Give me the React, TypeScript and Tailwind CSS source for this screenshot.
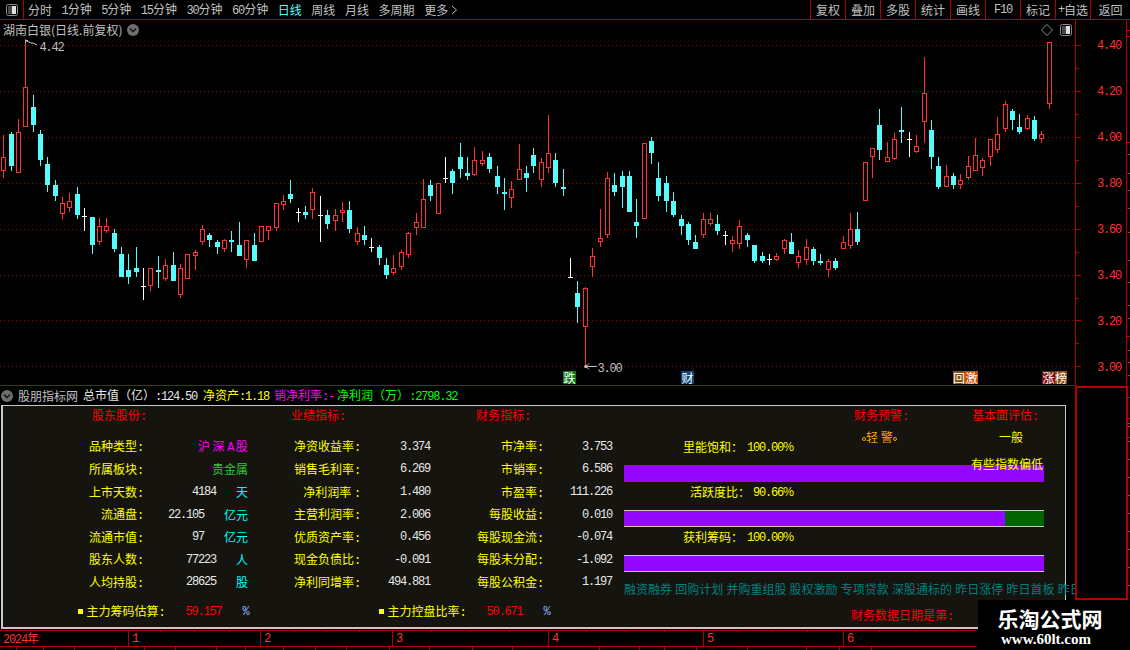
import React from "react";

type Kind = "r" | "c" | "w";
type Row = [number, number, number, number, number, Kind];

// [x, wickTop, wickBottom, bodyTop, bodyBottom, kind] read at 3x, offset by group origin
const groupA: Row[] = [
  [10,45,173,112,149,"r"],[34,37,153,42,137,"c"],[55,-3,155,37,155,"r"],[76,-242,17,-99,17,"r"],[100,-75,35,-39,15,"c"],
  [121,30,137,42,120,"c"],[142,111,216,132,195,"c"],[166,180,243,195,228,"c"],[187,232,297,250,278,"r"],[208,220,276,244,260,"r"],
  [232,202,297,222,285,"c"],[253,265,333,287,287,"w"],[277,292,402,292,375,"c"],[298,294,375,319,362,"r"],[319,294,338,319,329,"r"],
  [343,328,396,340,387,"c"],[364,381,471,402,471,"c"],[385,402,492,450,471,"c"],[409,381,471,444,456,"c"],[430,444,540,499,499,"w"],
  [451,444,513,445,494,"r"],[475,408,504,450,456,"c"],[496,417,483,436,473,"r"],[520,396,483,435,483,"c"],[541,433,534,445,521,"r"],
  [562,402,477,403,473,"r"],[586,390,450,397,404,"r"],[607,316,375,328,362,"r"],[628,339,381,345,360,"c"],[652,360,402,366,381,"c"],
  [673,357,396,361,384,"r"],[694,333,396,360,366,"c"],[718,306,408,375,408,"c"],[739,361,444,361,416,"r"],[763,339,423,375,423,"c"],
  [784,318,363,319,362,"r"],[805,318,360,319,329,"r"],[829,250,333,250,320,"r"],[850,225,270,244,251,"r"],[871,180,249,222,237,"c"],
  [895,265,306,277,277,"w"],[916,258,297,276,285,"c"],[937,204,297,217,266,"r"],[961,228,366,286,286,"w"],[982,270,327,285,312,"c"],
  [1006,267,333,286,300,"r"],[1027,246,306,271,277,"r"],[1048,243,339,270,327,"c"],[1072,321,375,340,362,"r"],[1093,318,375,345,360,"c"],
  [1114,354,396,381,381,"w"],[1138,375,435,381,414,"c"],
];
const groupB: Row[] = [
  [19,444,507,465,495,"c"],[40,435,495,475,487,"r"],[64,420,480,427,467,"r"],[85,366,444,370,433,"r"],[109,309,375,337,350,"r"],
  [130,207,350,268,350,"r"],[151,210,273,225,258,"c"],[175,220,308,220,308,"r"],[196,141,219,205,205,"w"],[217,177,252,183,219,"c"],
  [241,99,204,141,177,"c"],[262,141,210,189,198,"c"],[283,111,198,151,191,"r"],[307,123,168,151,158,"r"],[328,129,189,141,177,"c"],
  [352,168,252,198,231,"c"],[373,205,300,246,252,"c"],[394,213,294,238,260,"r"],[418,102,210,178,206,"r"],[439,168,246,189,204,"c"],
  [460,114,189,135,168,"c"],[484,144,231,157,206,"r"],[505,15,189,130,170,"r"],[526,129,231,150,219,"c"],[550,177,258,231,237,"c"],
  [571,444,504,501,501,"w"],[592,513,639,549,591,"c"],[616,531,769,534,647,"r"],[637,414,501,439,467,"r"],[661,297,411,385,392,"r"],
  [682,186,384,205,371,"r"],[703,189,258,225,246,"c"],[727,183,294,198,231,"c"],[748,183,306,198,306,"c"],[769,267,384,336,348,"c"],
  [793,99,323,99,323,"r"],[814,81,162,93,129,"c"],[835,156,273,204,258,"c"],[859,198,306,219,273,"c"],[880,246,321,273,315,"c"],
  [904,315,375,327,348,"c"],[925,336,405,342,390,"c"],[946,375,417,396,417,"c"],[970,309,384,327,371,"r"],[991,309,348,328,339,"r"],
  [1012,315,375,342,363,"c"],[1036,363,405,376,376,"w"],[1057,378,426,391,399,"r"],[1078,330,417,348,399,"r"],[1102,369,411,375,390,"c"],
];
const groupC: Row[] = [
  [13,405,459,405,453,"c"],[37,426,459,438,453,"c"],[58,432,465,446,446,"w"],[79,429,453,438,446,"r"],[103,387,432,390,414,"r"],
  [124,369,432,396,432,"c"],[145,420,474,438,456,"r"],[169,387,465,411,447,"r"],[190,411,465,417,453,"c"],[211,432,465,453,459,"c"],
  [235,447,501,453,476,"r"],[256,444,480,453,474,"c"],[280,378,417,396,414,"r"],[301,309,417,357,406,"r"],[322,306,405,357,396,"c"],
  [346,156,270,156,270,"r"],[367,114,204,114,137,"r"],[388,-3,150,45,120,"c"],[412,96,156,141,153,"r"],[433,69,150,87,144,"r"],
  [454,-9,99,60,66,"c"],[478,66,141,88,88,"w"],[499,75,129,108,123,"r"],[523,-159,99,-50,32,"r"],[544,30,177,60,141,"c"],
  [565,141,237,168,231,"c"],[589,165,228,198,228,"r"],[610,189,237,198,225,"c"],[631,192,237,210,221,"r"],[655,138,210,168,201,"r"],
  [676,84,183,135,180,"r"],[697,144,198,150,171,"r"],[721,87,168,87,138,"r"],[742,21,129,72,117,"r"],[766,-27,66,-18,53,"r"],
  [787,-3,60,3,30,"c"],[808,12,72,51,66,"c"],[832,15,60,24,54,"r"],[853,18,93,30,87,"c"],[874,63,99,72,84,"r"],[898,-204,-3,-204,-22,"r"],
];

const place = (rows: Row[], ox: number, oy: number): Row[] =>
  rows.map(([x, wt, wb, bt, bb, k]) => [ox + x / 3, oy + wt / 3, oy + wb / 3, oy + bt / 3, oy + bb / 3, k]);

const candles: Row[] = [...place(groupA, 0, 120), ...place(groupB, 380, 110), ...place(groupC, 750, 110)];
const gridY = [45.5, 91.5, 137.5, 183.5, 229.5, 275.5, 320.5, 366.5];

const colour = { r: "#ff3232", c: "#54fcfc", w: "#ffffff" };

function Candle({ d }: { d: Row }) {
  const [x0, wt, wb, bt, bb, k] = d;
  const x = Math.floor(x0) + 0.5;
  const top = Math.round(bt);
  const bot = Math.round(bb);
  const c = colour[k];
  return (
    <g shapeRendering="crispEdges">
      <line x1={x} x2={x} y1={Math.round(wt)} y2={Math.round(wb)} stroke={c} />
      {k === "w" ? (
        <line x1={x - 2.5} x2={x + 2.5} y1={top + 0.5} y2={top + 0.5} stroke={c} />
      ) : k === "r" ? (
        <rect x={x - 2} y={top + 0.5} width={4} height={Math.max(bot - top, 1)} fill="#000" stroke={c} />
      ) : (
        <rect x={x - 2.5} y={top} width={5} height={Math.max(bot - top, 2)} fill={c} />
      )}
    </g>
  );
}

function M({ children, className = "" }: { children: React.ReactNode; className?: string }) {
  return <span className={`font-['Liberation_Mono',monospace] tracking-[-1.2px] ${className}`}>{children}</span>;
}

function CircleChevron({ className = "" }: { className?: string }) {
  return (
    <svg width="12" height="12" viewBox="0 0 12 12" className={className}>
      <circle cx="6" cy="6" r="6" fill="#6e6e6e" />
      <path d="M3 4.5 L6 7.5 L9 4.5" fill="none" stroke="#1a1a1a" strokeWidth="1.6" />
    </svg>
  );
}

function PanelIcon() {
  return (
    <svg width="12" height="12" viewBox="0 0 12 12">
      <rect x="0.5" y="0.5" width="11" height="11" rx="2" fill="#000" stroke="#8c8c8c" />
      <rect x="2" y="2" width="4" height="8" fill="#4a4a4a" />
      <rect x="6" y="2" width="4" height="8" fill="#e0e0e0" />
    </svg>
  );
}

function Ring() {
  return <span className="inline-block w-[4px] h-[4px] rounded-full border border-[#ffa000] align-middle" />;
}

const periods: React.ReactNode[] = [
  "分时",
  <><M>1</M>分钟</>,
  <><M>5</M>分钟</>,
  <><M>15</M>分钟</>,
  <><M>30</M>分钟</>,
  <><M>60</M>分钟</>,
];
const tools: React.ReactNode[] = ["复权", "叠加", "多股", "统计", "画线", <M>F10</M>, "标记", <><M>+</M>自选</>, "返回"];

const Y = "text-[#ffff00]";
const W = "text-[#e8e8e8]";
const C = "text-[#00ffff]";

function Label({ children }: { children: React.ReactNode }) {
  return <div className={`${Y} text-right leading-[22.6px]`}>{children}</div>;
}
function Val({ children, unit }: { children: React.ReactNode; unit?: string }) {
  return (
    <div className={`flex justify-end items-center gap-[20px] leading-[22.6px] pt-[1px] ${unit ? "" : "pr-[1px]"}`}>
      <M className={W}>{children}</M>
      {unit && <span className={C}>{unit}</span>}
    </div>
  );
}

type TableRow = [string, React.ReactNode, string, string, string, string];
const table: TableRow[] = [
  ["品种类型", <div className="text-right text-[#ff00ff] leading-[22.6px]">沪 深 <M>A</M> 股</div>, "净资收益率", "3.374", "市净率", "3.753"],
  ["所属板块", <div className="text-right text-[#32c832] leading-[22.6px]">贵金属</div>, "销售毛利率", "6.269", "市销率", "6.586"],
  ["上市天数", <Val unit="天">4184</Val>, "净利润率 ", "1.480", "市盈率", "111.226"],
  ["流通盘", <Val unit="亿元">22.105</Val>, "主营利润率", "2.006", "每股收益", "0.010"],
  ["流通市值", <Val unit="亿元">97</Val>, "优质资产率", "0.456", "每股现金流", "-0.074"],
  ["股东人数", <Val unit="人">77223</Val>, "现金负债比", "-0.091", "每股未分配", "-1.092"],
  ["人均持股", <Val unit="股">28625</Val>, "净利同增率", "494.881", "每股公积金", "1.197"],
];

const tickerItems = ["融资融券", "回购计划", "并购重组股", "股权激励", "专项贷款", "深股通标的", "昨日涨停", "昨日首板", "昨日连板"];

const months = [
  { w: 128, t: "2024年" },
  { w: 132, t: "1" },
  { w: 132, t: "2" },
  { w: 156, t: "3" },
  { w: 155, t: "4" },
  { w: 140, t: "5" },
  { w: 134, t: "6" },
];
const topTicks = [160, 194, 229, 294, 326, 359, 431, 470, 509, 586, 625, 664, 737, 772, 807, 879, 916, 953];
const bottomTicks = [16, 43, 74, 115, 144, 175, 216, 245, 283, 315, 346, 389, 429, 472, 512, 599, 639, 664, 696, 747, 806, 839, 871];

function Marker({ text, bg, left, w = "w-[13px]" }: { text: string; bg: string; left: string; w?: string }) {
  return (
    <span className={`absolute top-[351px] h-[13px] ${left} ${w} ${bg} text-white text-center leading-[13px]`}>{text}</span>
  );
}

export default function App() {
  return (
    <div className="relative w-[1130px] h-[650px] overflow-hidden bg-black text-[12px] leading-none text-[#c0c0c0] font-['Noto_Sans_CJK_SC','Liberation_Sans',sans-serif]">
      {/* toolbar */}
      <div className="flex h-[20px] border-b border-[#b00000] items-center">
        <div className="flex items-center justify-center w-[24px] h-[19px] border-r border-[#b00000]">
          <PanelIcon />
        </div>
        <div className="flex items-center gap-[9.6px] pl-[4px]">
          {periods.map((p, i) => (
            <span key={i}>{p}</span>
          ))}
          <span className="text-[#54fcfc]">日线</span>
          <span>周线</span>
          <span>月线</span>
          <span>多周期</span>
          <span className="flex items-center">
            更多
            <svg width="7" height="10" viewBox="0 0 7 10" className="ml-[3px]">
              <path d="M1 1 L5.5 5 L1 9" fill="none" stroke="#c0c0c0" />
            </svg>
          </span>
        </div>
        <div className="ml-auto flex h-[19px]">
          {tools.map((t, i) => (
            <div
              key={i}
              className={`flex items-center justify-center h-[19px] border-l border-[#b00000] ${i === tools.length - 1 ? "w-[40px]" : "w-[35px]"}`}
            >
              {t}
            </div>
          ))}
        </div>
      </div>

      {/* chart + axis */}
      <div className="flex h-[366px]">
        <div className="relative w-[1075px] h-[366px] border-b border-[#b00000]">
          <svg width="1075" height="365" viewBox="0 20 1075 365" className="block">
            {gridY.map((y) => (
              <line key={y} x1="0" x2="1075" y1={y} y2={y} stroke="#9a0000" strokeDasharray="1 3" shapeRendering="crispEdges" />
            ))}
            {candles.map((d, i) => (
              <Candle key={i} d={d} />
            ))}
            <path d="M25.5 40.5 L28 40.5 M25.5 40.5 L25.5 43 M25.5 40.5 L31 43 L33 43 L37 45" fill="none" stroke="#c0c0c0" />
            <path d="M597 366.5 L586 366.5 M586 366.5 L589 363.5 M586 366.5 L589 369.5" fill="none" stroke="#c0c0c0" />
            <rect x="584.5" y="365" width="2.5" height="3" fill="#c0c0c0" />
          </svg>
          <div className="absolute left-[3px] top-[4px] flex items-center gap-[5px]">
            <span>湖南白银(日线.前复权)</span>
            <CircleChevron />
          </div>
          <div className="absolute left-[1041px] top-[4px] flex items-center gap-[7px]">
            <svg width="12" height="12" viewBox="0 0 12 12">
              <path d="M6 0.5 L11.5 6 L6 11.5 L0.5 6 Z" fill="none" stroke="#8c8c8c" />
            </svg>
            <PanelIcon />
          </div>
          <M className="absolute left-[39.5px] top-[21.5px]">4.42</M>
          <M className="absolute left-[597.5px] top-[342.5px]">3.00</M>
          <Marker text="跌" bg="bg-[#0a7a14]" left="left-[563px]" />
          <Marker text="财" bg="bg-[#0d4578]" left="left-[681px]" />
          <Marker text="回" bg="bg-[#84500f]" left="left-[953px]" w="w-[12px]" />
          <Marker text="激" bg="bg-[#c4530c]" left="left-[965px]" />
          <Marker text="涨" bg="bg-[#850c12]" left="left-[1042px]" />
          <Marker text="榜" bg="bg-[#8a4a10]" left="left-[1055px]" w="w-[12px]" />
        </div>

        <div className="relative flex-1 h-[366px] text-[#ff3232] border-l border-[#b00000]">
          <svg width="54" height="366" viewBox="1076 20 54 366" className="absolute left-0 top-0">
            {gridY.map((y) => (
              <line key={y} x1="1076" x2="1081" y1={y} y2={y} stroke="#b00000" shapeRendering="crispEdges" />
            ))}
            {gridY.slice(0, 7).map((y) => (
              <line key={y} x1="1076" x2="1079" y1={y + 23} y2={y + 23} stroke="#b00000" shapeRendering="crispEdges" />
            ))}
            <line x1="1126.5" x2="1126.5" y1="20" y2="386" stroke="#b00000" shapeRendering="crispEdges" />
            {[30, 36, 142, 336].map((y) => (
              <line key={y} x1="1127" x2="1130" y1={y + 0.5} y2={y + 0.5} stroke="#b00000" shapeRendering="crispEdges" />
            ))}
            {[154, 173, 190, 208, 232, 260, 282, 305, 318, 350, 362, 375].map((y) => (
              <line key={y} x1="1128" x2="1130" y1={y + 0.5} y2={y + 0.5} stroke="#a04040" shapeRendering="crispEdges" />
            ))}
          </svg>
          <div className="flex flex-col pt-[3.5px] pl-[21px]">
            {["4.40", "4.20", "4.00", "3.80", "3.60", "3.40", "3.20", "3.00"].map((p) => (
              <div key={p} className="h-[45.95px] flex items-center">
                <M>{p}</M>
              </div>
            ))}
          </div>
        </div>
      </div>

      {/* lower section */}
      <div className="flex">
        <div className="w-[1075px]">
          <div className="flex items-center h-[19px] pl-[1px]">
            <CircleChevron />
            <span className="ml-[5px]">股朋指标网</span>
            <span className="ml-[5px] text-[#e8e8e8]">
              总市值（亿）<M>:124.50</M>
            </span>
            <span className={`ml-[6px] ${Y}`}>
              净资产<M>:1.18</M>
            </span>
            <span className="ml-[5px] text-[#ff00ff]">
              销净利率<M>:-</M>
            </span>
            <span className="ml-[3px] text-[#00ff00]">
              净利润（万）<M>:2798.32</M>
            </span>
          </div>

          <div className="relative ml-[1px] w-[1065px] h-[224px] bg-[#15140f] border-t border-r border-l-2 border-b-2 border-[#c8c8c8]">
            <div className="flex h-[20px] items-center text-[#ff0000] pl-[89px]">
              <div className="w-[199px]">股东股份<M>:</M></div>
              <div className="w-[185px]">业绩指标<M>:</M></div>
              <div className="w-[378px]">财务指标<M>:</M></div>
              <div className="w-[118px]">财务预警<M>:</M></div>
              <div>基本面评估<M>:</M></div>
            </div>

            <div className="flex mt-[9.4px]">
              <div className="grid grid-cols-[140px_105px_112px_71px_112px_70px] auto-rows-[22.6px] w-[610px] shrink-0">
                {table.map((r, i) => (
                  <React.Fragment key={i}>
                    <Label>{r[0]}<M>:</M></Label>
                    {r[1]}
                    <Label>{r[2]}<M>:</M></Label>
                    <Val>{r[3]}</Val>
                    <Label>{r[4]}<M>:</M></Label>
                    <Val>{r[5]}</Val>
                  </React.Fragment>
                ))}
              </div>
              <div className="ml-[11px] flex flex-col w-[420px]">
                <div className={`w-[170px] h-[22.6px] flex items-center justify-end ${Y}`}>
                  里能饱和：<span className="ml-[4px]"><M>100.00</M>%</span>
                </div>
                <div className="h-[17px] mt-[7px] bg-[#9408ff]" />
                <div className={`w-[170px] h-[20px] flex items-center justify-end ${Y}`}>
                  活跃度比：<span className="ml-[3px]"><M>90.66</M>%</span>
                </div>
                <div className="flex h-[17px] mt-[8px] border-y border-[#c8c8c8]">
                  <div className="w-[381px] bg-[#9408ff]" />
                  <div className="flex-1 bg-[#006400]" />
                </div>
                <div className={`w-[170px] h-[20px] flex items-center justify-end ${Y}`}>
                  获利筹码：<span className="ml-[4px]"><M>100.00</M>%</span>
                </div>
                <div className="h-[17px] mt-[8px] bg-[#9408ff] border-y border-[#c8c8c8]" />
                <div className="flex gap-[3.2px] w-[451px] h-[18px] mt-[8px] items-center overflow-hidden whitespace-nowrap text-[#008080]">
                  {tickerItems.map((t) => (
                    <span key={t} className="shrink-0">{t}</span>
                  ))}
                </div>
              </div>
            </div>

            <div className="flex items-center h-[18px] mt-[4.6px] pl-[75px]">
              <div className="flex items-center w-[301px]">
                <span className="w-[5px] h-[5px] bg-[#ffff00]" />
                <span className={`ml-[3.5px] ${Y}`}>主力筹码估算<M>:</M></span>
                <M className="ml-[21px] text-[#ff0000]">59.157</M>
                <M className="ml-[21px] text-[#87b5ff]">%</M>
              </div>
              <div className="flex items-center">
                <span className="w-[5px] h-[5px] bg-[#ffff00]" />
                <span className={`ml-[3.5px] ${Y}`}>主力控盘比率<M>:</M></span>
                <M className="ml-[21px] text-[#ff0000]">50.671</M>
                <M className="ml-[21px] text-[#87b5ff]">%</M>
              </div>
            </div>

            <span className="absolute left-[848px] top-[203px] text-[#ff0000]">财务数据日期是第<M>:</M></span>
            <span className="absolute left-[859px] top-[25px] text-[#ffa000]">
              <Ring />轻 警<Ring />
            </span>
            <span className="absolute left-[996px] top-[25px] text-[#ffff00]">一般</span>
            <span className="absolute left-[968px] top-[52px] text-[#ffff00]">有些指数偏低</span>
          </div>

          <div className="flex mt-[1px] w-[977px] h-[17px] border-y border-[#b00000] text-[#ff3232] relative">
            {months.map((m, i) => (
              <div
                key={m.t}
                className={`h-[15px] flex items-center pl-[3px] ${i > 0 ? "border-l border-[#b00000]" : ""}`}
                style={{ width: m.w }}
              >
                {i === 0 ? (
                  <span>
                    <M>2024</M>年
                  </span>
                ) : (
                  <M>{m.t}</M>
                )}
              </div>
            ))}
            <svg width="977" height="20" viewBox="0 630 977 20" className="absolute -left-0 -top-[1px]">
              {topTicks.map((x) => (
                <line key={x} x1={x + 0.5} x2={x + 0.5} y1="630" y2="632" stroke="#b00000" shapeRendering="crispEdges" />
              ))}
              {bottomTicks.map((x) => (
                <line key={x} x1={x + 0.5} x2={x + 0.5} y1="647" y2="650" stroke="#b00000" shapeRendering="crispEdges" />
              ))}
            </svg>
          </div>
        </div>

        <div className="w-[53px] h-[214px] border-2 border-[#b00000]" />
        <svg width="2" height="214" viewBox="1128 386 2 214">
          {[397, 418, 437].map((y) => (
            <line key={y} x1="1128" x2="1130" y1={y + 0.5} y2={y + 0.5} stroke="#b00000" shapeRendering="crispEdges" />
          ))}
          {[423, 426, 441, 459, 477, 495, 513, 531, 549, 567, 585].map((y) => (
            <line key={y} x1="1128" x2="1130" y1={y + 0.5} y2={y + 0.5} stroke="#a04040" shapeRendering="crispEdges" />
          ))}
        </svg>
      </div>

      {/* watermark */}
      <div className="absolute right-0 bottom-0 w-[152px] h-[50px] bg-black flex flex-col items-center text-white font-bold pr-[8px]">
        <span className="text-[21px] leading-[24px] mt-[6px] font-['Noto_Sans_CJK_SC',sans-serif]">乐淘公式网</span>
        <span className="text-[15px] leading-[18px] mr-[8px] font-['Liberation_Serif',serif]">www.60lt.com</span>
      </div>
    </div>
  );
}
